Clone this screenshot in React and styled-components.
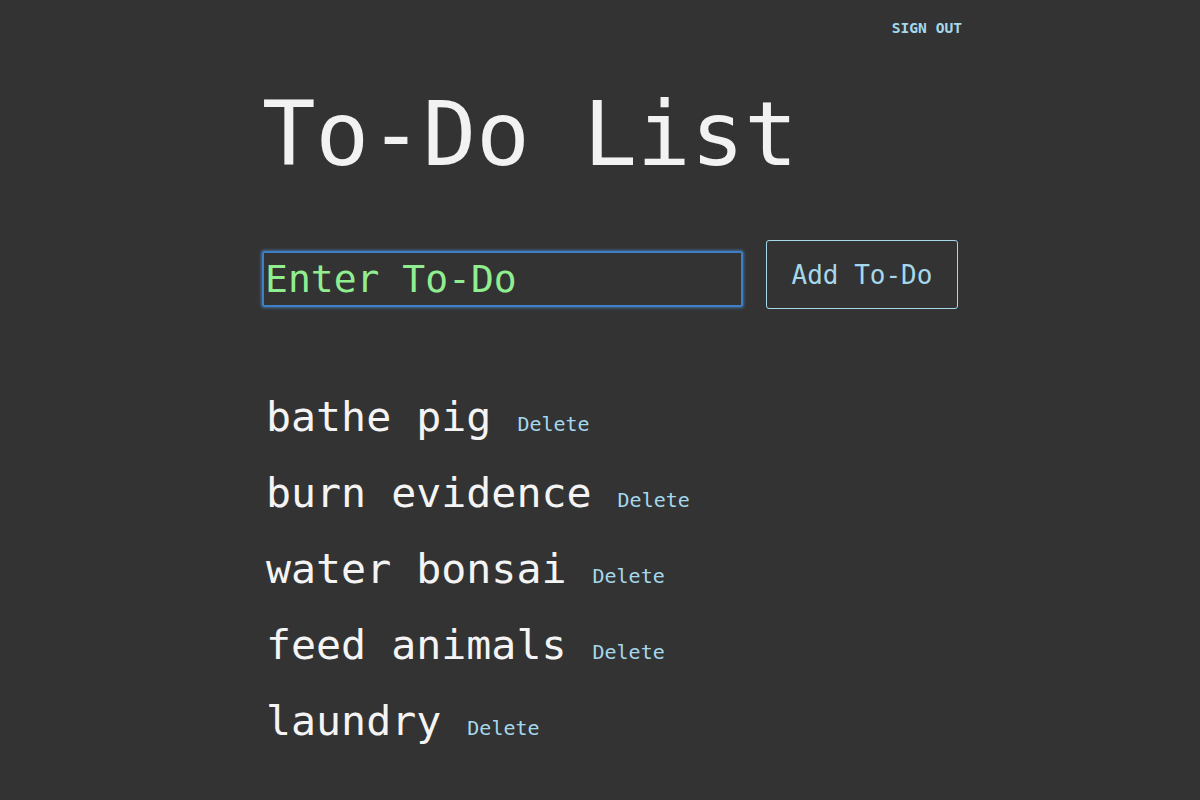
import React, { useState } from 'react';
import styled, { createGlobalStyle } from 'styled-components';

const GlobalStyle = createGlobalStyle`
  html, body {
    margin: 0;
    padding: 0;
    background: #333333;
  }
  body {
    font-family: "DejaVu Sans Mono", "Liberation Mono", monospace;
    color: #f2f2f2;
  }
`;

const Page = styled.div`
  width: 700px;
  margin: 0 0 0 262px;
  min-height: 800px;
`;

const TopBar = styled.header`
  display: flex;
  justify-content: flex-end;
  padding-top: 19px;
`;

const SignOut = styled.button`
  background: none;
  border: none;
  padding: 0;
  color: #a6d8ec;
  font-family: inherit;
  font-size: 14.6px;
  font-weight: bold;
  cursor: pointer;
`;

const Title = styled.h1`
  margin: 54px 0 0;
  font-size: 89px;
  font-weight: normal;
  line-height: 1;
  color: #f2f2f2;
`;

const Form = styled.form`
  display: flex;
  align-items: flex-start;
  gap: 23px;
  margin-top: 61px;
`;

const Input = styled.input`
  width: 481px;
  height: 56px;
  box-sizing: border-box;
  background: transparent;
  border: 2px solid #3f7fc6;
  border-radius: 2px;
  box-shadow: 0 0 3px 1px rgba(80, 150, 230, 0.55);
  outline: none;
  padding: 0 2px 0 1px;
  font-family: inherit;
  font-size: 38px;
  color: #90ee90;
  margin-top: 11px;

  &::placeholder {
    color: #90ee90;
    opacity: 1;
  }
`;

const AddButton = styled.button`
  width: 192px;
  height: 69px;
  background: transparent;
  border: 1px solid #a6d8ec;
  border-radius: 3px;
  color: #a6d8ec;
  font-family: inherit;
  font-size: 26px;
  padding: 0;
  cursor: pointer;
`;

const List = styled.ul`
  list-style: none;
  margin: 83px 0 0;
  padding: 0 0 0 4px;
`;

const Item = styled.li`
  display: flex;
  align-items: baseline;
  height: 76px;
`;

const ItemText = styled.span`
  font-size: 41.6px;
  color: #f4f4f4;
`;

const DeleteButton = styled.button`
  background: none;
  border: none;
  padding: 0;
  margin-left: 26px;
  color: #a6d8ec;
  font-family: inherit;
  font-size: 20px;
  cursor: pointer;
`;

const initialTodos = ['bathe pig', 'burn evidence', 'water bonsai', 'feed animals', 'laundry'];

export default function App() {
  const [todos, setTodos] = useState(initialTodos);
  const [text, setText] = useState('');

  const add = (e) => {
    e.preventDefault();
    if (!text.trim()) return;
    setTodos([...todos, text.trim()]);
    setText('');
  };

  return (
    <>
      <GlobalStyle />
      <Page>
        <TopBar>
          <SignOut>SIGN OUT</SignOut>
        </TopBar>
        <Title>To-Do List</Title>
        <Form onSubmit={add}>
          <Input
            placeholder="Enter To-Do"
            value={text}
            onChange={(e) => setText(e.target.value)}
          />
          <AddButton type="submit">Add To-Do</AddButton>
        </Form>
        <List>
          {todos.map((t, i) => (
            <Item key={i}>
              <ItemText>{t}</ItemText>
              <DeleteButton onClick={() => setTodos(todos.filter((_, j) => j !== i))}>
                Delete
              </DeleteButton>
            </Item>
          ))}
        </List>
      </Page>
    </>
  );
}
